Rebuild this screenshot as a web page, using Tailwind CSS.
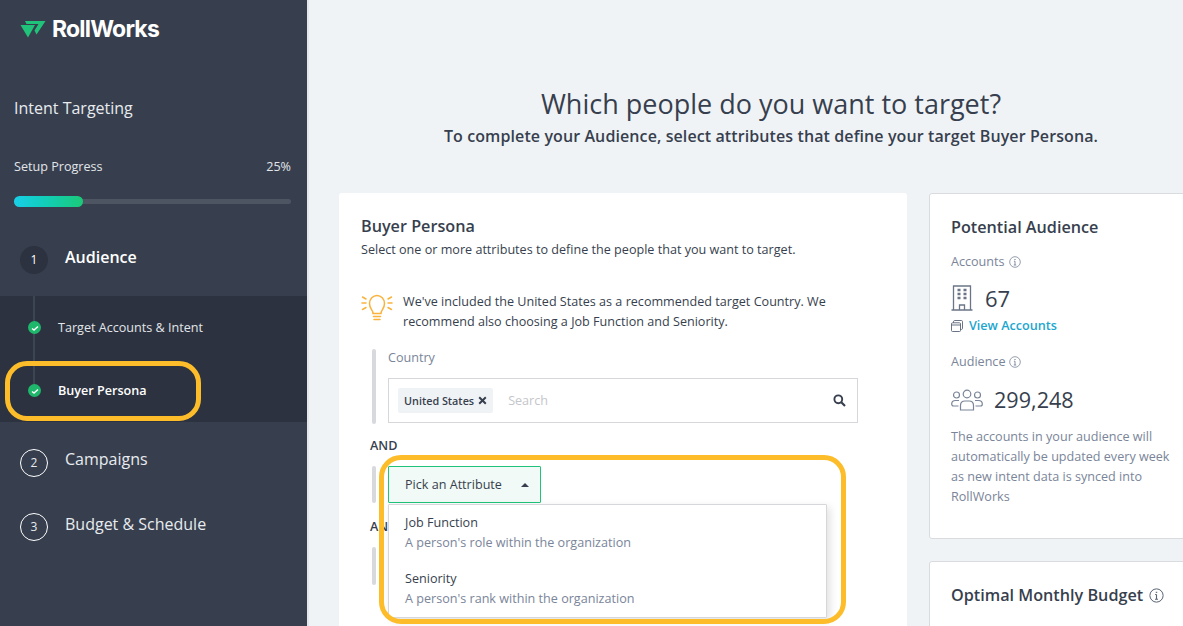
<!DOCTYPE html>
<html lang="en">
<head>
    <meta charset="UTF-8">
    <title>RollWorks | Intent Targeting</title>
    <script src="https://cdn.jsdelivr.net/npm/@tailwindcss/browser@4"></script>
</head>
<body class="h-[626px] overflow-hidden bg-[#f0f3f6] font-['Open_Sans',sans-serif] text-[#373f4e]">
    <div class="relative flex h-[626px] overflow-hidden">
        <!-- Sidebar -->
        <aside class="w-[307px] h-full shrink-0 bg-[#373f4e] text-white">
            <div class="flex items-center h-[20px] mt-[19px] ml-[20px]">
                <svg class="w-[26px] h-[18px]" viewBox="0 0 26 18">
                    <path d="M0.5 5H15L8 17.5Z" fill="#1fc47a"/>
                    <path d="M5 1H25.5L16.5 14.5L14.5 10.5L18.5 4H6.5Z" fill="#1fc47a"/>
                </svg>
                <span class="ml-[6px] font-['Inter',sans-serif] font-bold text-[23px] tracking-[-0.8px] leading-none">RollWorks</span>
            </div>
            <div class="mt-[58px] ml-[14px] text-[16px] leading-[22px] text-[#e8ebef]">Intent Targeting</div>
            <div class="flex justify-between mt-[39px] mr-[16px] ml-[14px] text-[12.6px] leading-[18px] text-[#e2e5ea]">
                <span>Setup Progress</span><span>25%</span>
            </div>
            <div class="relative mt-[23px] mr-[16px] ml-[14px] h-[5px] bg-[#4d5563] rounded-full">
                <div class="absolute left-0 top-[-3px] w-[69px] h-[11px] rounded-full bg-gradient-to-r from-[#19cfe8] to-[#1cc977]"></div>
            </div>

            <div class="flex items-start mt-[42px] ml-[20px] h-[50px]">
                <div class="w-[28px] h-[28px] rounded-full bg-[#2c323f] flex items-center justify-center text-[12px]">1</div>
                <span class="ml-[17px] mt-[0px] text-[16px] leading-[22px] font-semibold">Audience</span>
            </div>

            <div class="relative h-[126px] bg-[#2c323f]">
                <div class="absolute left-[33px] top-0 w-[2px] h-[95px] bg-[#3d4555]"></div>
                <div class="relative flex items-center h-[63px] pl-[28px]">
                    <span class="w-[13px] h-[13px] rounded-full bg-[#1fb76c] flex items-center justify-center">
                        <svg class="w-[8px] h-[8px]" viewBox="0 0 8 8"><path d="M1 4.5L3 6L7 2.5" fill="none" stroke="#fff" stroke-width="1.4"/></svg>
                    </span>
                    <span class="ml-[17px] mt-[2px] text-[12.6px] text-[#e2e5ea]">Target Accounts &amp; Intent</span>
                </div>
                <div class="relative flex items-center h-[63px] pl-[28px]">
                    <span class="w-[13px] h-[13px] rounded-full bg-[#1fb76c] flex items-center justify-center">
                        <svg class="w-[8px] h-[8px]" viewBox="0 0 8 8"><path d="M1 4.5L3 6L7 2.5" fill="none" stroke="#fff" stroke-width="1.4"/></svg>
                    </span>
                    <span class="ml-[17px] mt-[2px] text-[12.6px] font-semibold">Buyer Persona</span>
                </div>
            </div>

            <div class="flex items-center mt-[27px] ml-[20px]">
                <div class="w-[28px] h-[28px] rounded-full border border-white flex items-center justify-center text-[12px] text-[#e8ebef]">2</div>
                <span class="ml-[17px] mt-[-9px] text-[16px] text-[#e8ebef]">Campaigns</span>
            </div>
            <div class="flex items-center mt-[36px] ml-[20px]">
                <div class="w-[28px] h-[28px] rounded-full border border-white flex items-center justify-center text-[12px] text-[#e8ebef]">3</div>
                <span class="ml-[17px] mt-[-6px] text-[16px] text-[#e8ebef]">Budget &amp; Schedule</span>
            </div>
        </aside>
        <div class="w-[2px] h-full shrink-0 bg-[#e3e6ea]"></div>

        <!-- Main -->
        <main class="flex-1 min-w-0">
            <div class="mt-[85px] text-center ml-[30px] w-[864px]">
                <h1 class="text-[27px] leading-[38px]">Which people do you want to target?</h1>
                <p class="tracking-[0.1px] text-[16px] leading-[24px] font-semibold mt-[1px] whitespace-nowrap">To complete your Audience, select attributes that define your target Buyer Persona.</p>
            </div>

            <div class="flex items-start mt-[45px] ml-[30px]">
                <!-- Persona card -->
                <section class="w-[568px] h-[500px] shrink-0 bg-white rounded-[3px] pt-[22px] pl-[22px]">
                    <h2 class="text-[16.2px] leading-[22px] font-semibold">Buyer Persona</h2>
                    <p class="text-[12.6px] leading-[18px] mt-[4px]">Select one or more attributes to define the people that you want to target.</p>

                    <div class="flex mt-[34px]">
                        <svg class="w-[32px] h-[28px] shrink-0 mt-[1px]" viewBox="0 0 32 28" fill="none" stroke="#f9b23c" stroke-width="1.5" stroke-linecap="round">
                            <path d="M12 19.5C12 16 8.5 15 8.5 9.5C8.5 5 12 1.5 16 1.5C20 1.5 23.5 5 23.5 9.5C23.5 15 20 16 20 19.5Z"/>
                            <path d="M12.5 22.5H19.5M13 25.5H19"/>
                            <path d="M1 9H5M1.5 3L5 5M1.5 15.5L5 13.5M27 9H31M27 5L30.5 3M27 13.5L30.5 15.5"/>
                        </svg>
                        <p class="ml-[10px] w-[450px] text-[12.6px] leading-[20px] mt-[-1px]">We've included the United States as a recommended target Country. We recommend also choosing a Job Function and Seniority.</p>
                    </div>

                    <div class="relative mt-[17px] ml-[11px] pl-[16px]">
                        <div class="absolute left-0 top-0 w-[4px] h-[75px] bg-[#d7d9dd] rounded-[2px]"></div>
                        <div class="text-[12.6px] leading-[18px] text-[#7a8599]">Country</div>
                        <div class="flex items-center mt-[11px] w-[470px] h-[45px] border border-[#d5d7db] pl-[9px] pr-[11px]">
                            <span class="flex items-center h-[25px] px-[6px] pt-[1px] bg-[#f0f3f6] rounded-[2px] text-[10.8px] font-semibold">United States
                                <svg class="w-[9px] h-[9px] ml-[4px] mt-[-2px]" viewBox="0 0 9 9"><path d="M1.2 1.2L7.8 7.8M7.8 1.2L1.2 7.8" stroke="#373f4e" stroke-width="2"/></svg>
                            </span>
                            <span class="ml-[15px] mt-[2px] text-[12.6px] text-[#c4c6ca]">Search</span>
                            <svg class="ml-auto w-[13px] h-[13px]" viewBox="0 0 13 13" fill="none" stroke="#373f4e"><circle cx="5.3" cy="5.3" r="3.9" stroke-width="1.9"/><path d="M8.3 8.3L12 12" stroke-width="2.2"/></svg>
                        </div>
                    </div>

                    <div class="text-[12.6px] leading-[18px] font-semibold mt-[14px] ml-[9px]">AND</div>

                    <div class="relative mt-[11px] ml-[11px] pl-[16px]">
                        <div class="absolute left-0 top-0 w-[4px] h-[37px] bg-[#d7d9dd] rounded-[2px]"></div>
                        <div class="flex items-center w-[153px] h-[37px] border border-[#1fc47a] rounded-[1px] bg-[#f1faf6] pl-[16px] pt-[2px] text-[12.6px]">
                            Pick an Attribute
                            <span class="ml-[19px] mt-[-2px] w-0 h-0 border-x-[4px] border-x-transparent border-b-[4px] border-b-[#373f4e]"></span>
                        </div>
                    </div>

                    <div class="relative text-[12.6px] leading-[18px] font-semibold mt-[15px] ml-[9px]">AND</div>
                    <div class="mt-[11px] ml-[11px] w-[4px] h-[38px] bg-[#d7d9dd] rounded-[2px]"></div>
                </section>

                <!-- Right column -->
                <div class="ml-[22px] w-[261px] shrink-0">
                    <section class="h-[346px] bg-white border border-[#d9dbdf] rounded-[3px] pt-[22px] pl-[21px] pr-[8px]">
                        <h2 class="text-[16.2px] leading-[22px] font-semibold">Potential Audience</h2>
                        <div class="flex items-center mt-[15px] text-[12.6px] leading-[18px] text-[#7a8599]">Accounts
                            <svg class="w-[12px] h-[12px] ml-[4px]" viewBox="0 0 12 12" fill="none" stroke="#7a8599"><circle cx="6" cy="6" r="5.3" stroke-width="0.8"/><path d="M6 5.2V9M4.8 9H7.2M4.9 5.2H6" stroke-width="0.9"/><path d="M6 3V3.9" stroke-width="1.2"/></svg>
                        </div>
                        <div class="flex items-center mt-[14px] h-[26px]">
                            <svg class="w-[22px] h-[26px]" viewBox="0 0 22 26" fill="none" stroke="#6b7587" stroke-width="1.3">
                                <path d="M2.5 25V1H19.5V25M0.5 25H21.5M8.5 25V20H13.5V25"/>
                                <path d="M6.5 5H9.5M12.5 5H15.5M6.5 9H9.5M12.5 9H15.5M6.5 13H9.5M12.5 13H15.5" stroke-width="2.4"/>
                            </svg>
                            <span class="ml-[12px] text-[22px] leading-[26px]">67</span>
                        </div>
                        <div class="flex items-center mt-[6px] text-[12.6px] leading-[18px] font-semibold text-[#1aa6cf]">
                            <svg class="w-[12px] h-[12px] mr-[6px]" viewBox="0 0 12 12" fill="none" stroke="#5a6476" stroke-width="0.9"><rect x="0.5" y="2.8" width="9" height="8.7" rx="1"/><path d="M0.5 5H9.5M2.5 2.8V1.9C2.5 1.2 2.8 0.5 3.5 0.5H10.5C11.2 0.5 11.5 1 11.5 1.7V8.5C11.5 9.2 11 9.5 9.5 9.5"/></svg>
                            View Accounts
                        </div>
                        <div class="flex items-center mt-[18px] text-[12.6px] leading-[18px] text-[#7a8599]">Audience
                            <svg class="w-[12px] h-[12px] ml-[4px]" viewBox="0 0 12 12" fill="none" stroke="#7a8599"><circle cx="6" cy="6" r="5.3" stroke-width="0.8"/><path d="M6 5.2V9M4.8 9H7.2M4.9 5.2H6" stroke-width="0.9"/><path d="M6 3V3.9" stroke-width="1.2"/></svg>
                        </div>
                        <div class="flex items-center mt-[16px] h-[26px]">
                            <svg class="w-[32px] h-[22px]" viewBox="0 0 32 22" fill="none" stroke="#7a8599" stroke-width="1.2">
                                <circle cx="16" cy="5" r="3.8"/><circle cx="5.5" cy="6" r="3"/><circle cx="26.5" cy="6" r="3"/>
                                <path d="M9.5 21V16.5C9.5 13.5 11.5 12 14 12H18C20.5 12 22.5 13.5 22.5 16.5V21Z"/>
                                <path d="M7.5 17H2.5C1.3 17 0.7 16 0.7 15C0.7 12.5 2.5 11.5 4.5 11.5H8M24.5 17H29.5C30.7 17 31.3 16 31.3 15C31.3 12.5 29.5 11.5 27.5 11.5H24"/>
                            </svg>
                            <span class="ml-[11px] text-[21.6px] leading-[26px]">299,248</span>
                        </div>
                        <p class="mt-[14px] text-[12.6px] leading-[20px] text-[#7a8599] w-[225px]">The accounts in your audience will automatically be updated every week as new intent data is synced into RollWorks</p>
                    </section>
                    <section class="mt-[22px] h-[120px] bg-white border border-[#d9dbdf] rounded-[3px] pt-[22px] pl-[21px]">
                        <h2 class="flex items-center text-[16.2px] leading-[22px] font-semibold">Optimal Monthly Budget
                            <svg class="w-[15px] h-[15px] ml-[6px]" viewBox="0 0 12 12" fill="none" stroke="#5a6476"><circle cx="6" cy="6" r="5.3" stroke-width="0.8"/><path d="M6 5.2V9M4.8 9H7.2M4.9 5.2H6" stroke-width="0.9"/><path d="M6 3V3.9" stroke-width="1.2"/></svg>
                        </h2>
                    </section>
                </div>
            </div>
        </main>

        <!-- Dropdown menu over the card -->
        <div class="absolute left-[388px] top-[504px] w-[439px] h-[114px] bg-white border border-[#d5d7db] rounded-[1px] shadow-[3px_3px_8px_rgba(0,0,0,0.12)] pl-[16px] pt-[8px] text-[12.6px]">
            <div class="leading-[20px]">Job Function</div>
            <div class="leading-[20px] text-[#7a8599]">A person's role within the organization</div>
            <div class="leading-[20px] mt-[16px]">Seniority</div>
            <div class="leading-[20px] text-[#7a8599]">A person's rank within the organization</div>
        </div>

        <!-- Yellow annotations -->
        <div class="absolute left-[5px] top-[361px] w-[196px] h-[60px] border-[5px] border-[#fdbd2a] rounded-[22px]"></div>
        <div class="absolute left-[379px] top-[455px] w-[467px] h-[169px] border-[5px] border-[#fdbd2a] rounded-[22px]"></div>
    </div>
</body>
</html>
